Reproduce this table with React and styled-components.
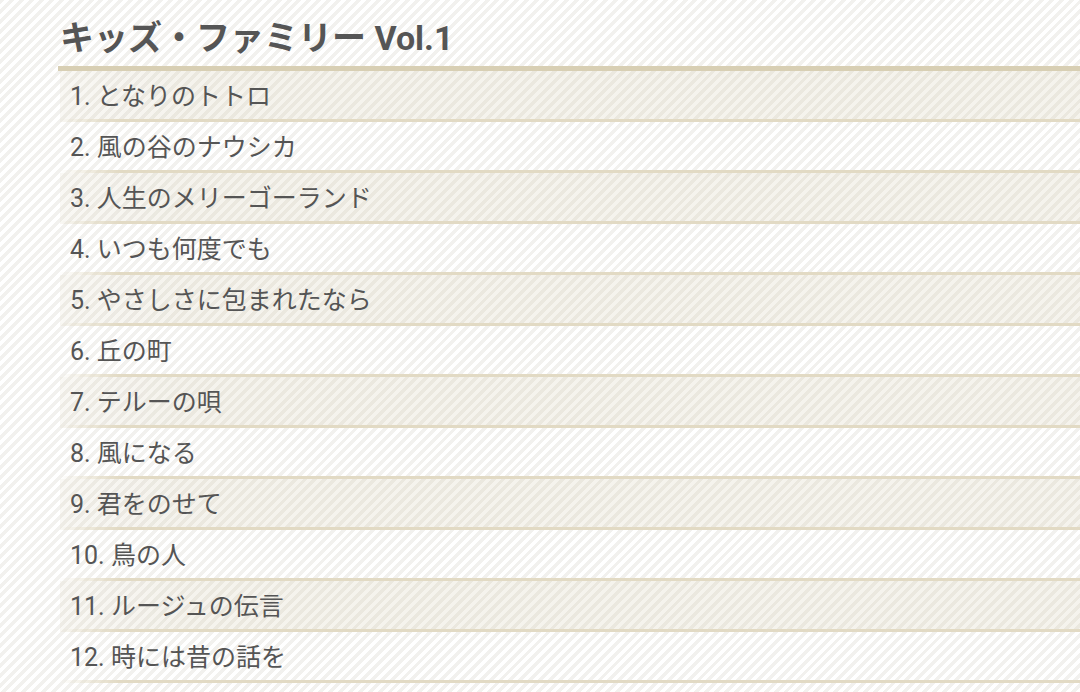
import React from 'react'
import styled, { createGlobalStyle } from 'styled-components'

const GlobalStyle = createGlobalStyle`
  html, body {
    margin: 0;
    padding: 0;
  }
  body {
    background: repeating-linear-gradient(
      -45deg,
      #ffffff 0px,
      #ffffff 3.5px,
      #f2f1ee 3.5px,
      #f2f1ee 7px
    );
    font-family: Roboto, "Noto Sans CJK JP", sans-serif;
    color: #555;
    min-height: 692px;
    overflow: hidden;
  }
`

const Page = styled.div`
  padding: 14px 0 0 58px;
`

const Title = styled.h1`
  margin: 0;
  padding: 0 0 4px 2px;
  font-size: 34px;
  line-height: 48px;
  font-weight: 700;
  color: #555;
  border-bottom: 5px solid #d8cfb4;
`

const List = styled.ol`
  list-style: none;
  margin: 0;
  padding: 0 0 0 2px;
`

const Row = styled.li`
  height: 45px;
  line-height: 45px;
  padding: 3px 0 0 10px;
  font-size: 25px;
  color: #555;
  background: ${p => (p.$shade ? 'linear-gradient(90deg, rgba(205,195,165,0.12), rgba(205,195,165,0.2) 120px)' : 'transparent')};
  border-bottom: 3px solid transparent;
  border-image: linear-gradient(90deg, rgba(220,210,180,0) 0px, rgba(220,210,180,0.25) 20px, #e2dac4 60px) 1;
`

const songs = [
  'となりのトトロ',
  '風の谷のナウシカ',
  '人生のメリーゴーランド',
  'いつも何度でも',
  'やさしさに包まれたなら',
  '丘の町',
  'テルーの唄',
  '風になる',
  '君をのせて',
  '鳥の人',
  'ルージュの伝言',
  '時には昔の話を',
]

const App = () => (
  <>
    <GlobalStyle />
    <Page>
      <Title>キッズ・ファミリー Vol.1</Title>
      <List>
        {songs.map((s, i) => (
          <Row key={s} $shade={i % 2 === 0}>
            {i + 1}. {s}
          </Row>
        ))}
      </List>
    </Page>
  </>
)

export default App
